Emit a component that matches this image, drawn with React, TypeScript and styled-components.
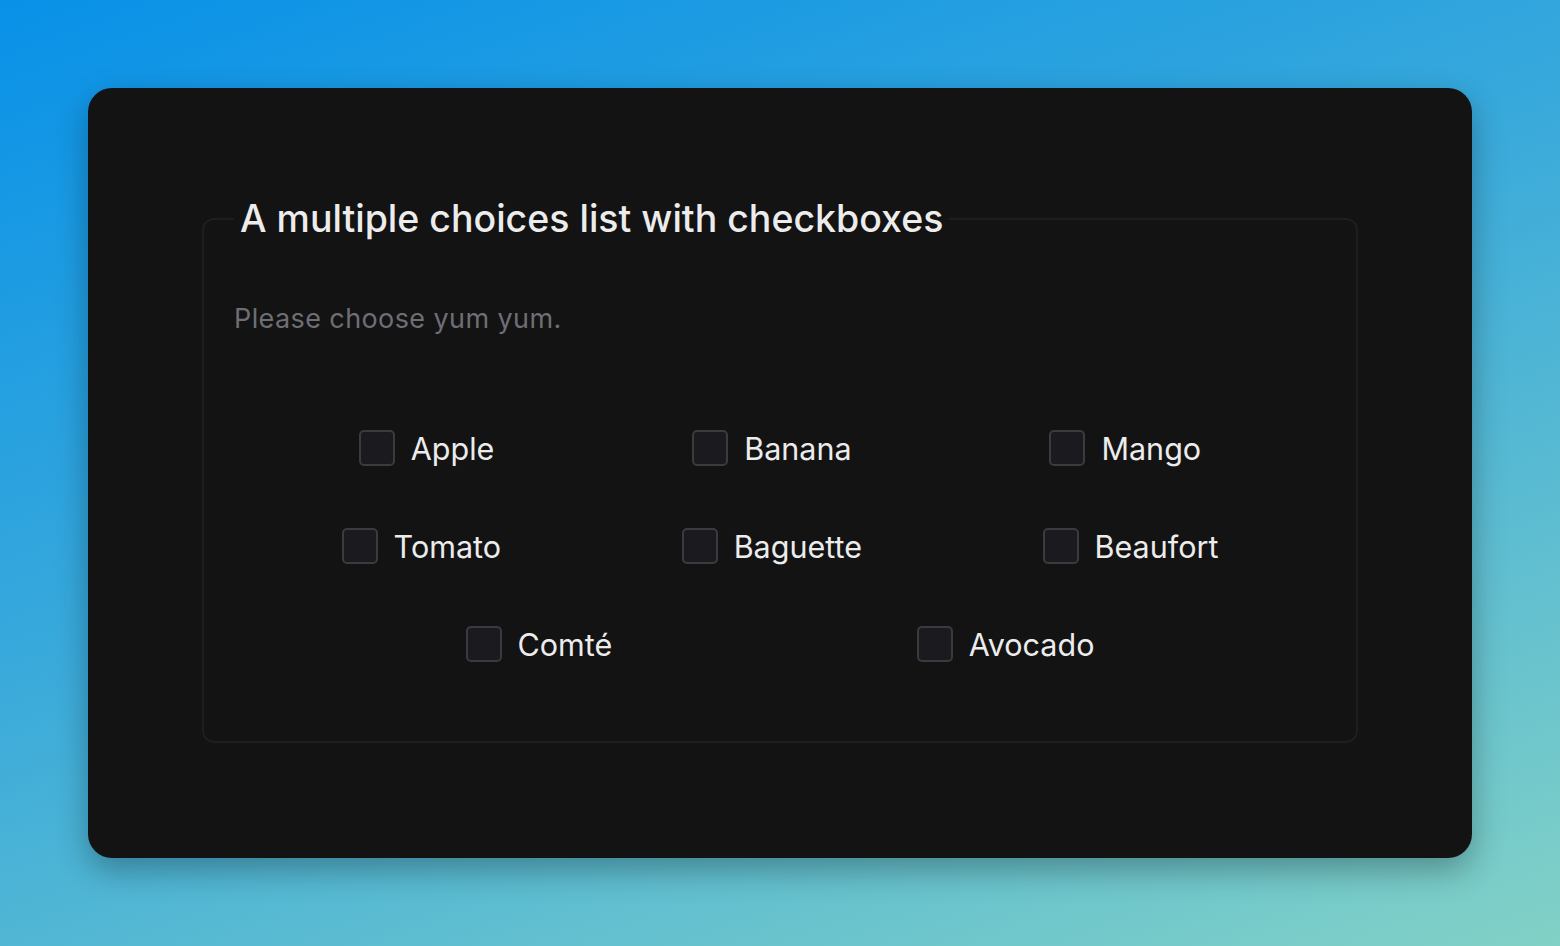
import styled, { createGlobalStyle } from 'styled-components';

const GlobalStyle = createGlobalStyle`
  html, body {
    margin: 0;
    padding: 0;
  }
  body {
    min-height: 946px;
    background: linear-gradient(160deg, #0891e8 0%, #3aaadb 45%, #82d1c6 100%);
    font-family: Inter, "Noto Sans", "Liberation Sans", sans-serif;
  }
`;

const foods = ['Apple', 'Banana', 'Mango', 'Tomato', 'Baguette', 'Beaufort', 'Comté', 'Avocado'];

const App = () => {
  return (
    <>
      <GlobalStyle />
      <Page>
        <Card>
          <Fieldset>
            <Legend>A multiple choices list with checkboxes</Legend>
            <Hint>Please choose yum yum.</Hint>
            <Choices>
              {foods.map((food) => (
                <Choice key={food}>
                  <Box type="checkbox" name="food" value={food} />
                  <span>{food}</span>
                </Choice>
              ))}
            </Choices>
          </Fieldset>
        </Card>
      </Page>
    </>
  );
};

export default App;

const Page = styled.div`
  padding: 88px;
  box-sizing: border-box;
  height: 946px;
`;

const Card = styled.div`
  background: #131313;
  border-radius: 24px;
  height: 770px;
  box-sizing: border-box;
  padding: 108px 114px 0;
  box-shadow: 0 12px 32px rgba(0, 0, 0, 0.3);
`;

const Fieldset = styled.fieldset`
  margin: 0;
  padding: 0 30px 48px;
  border: 2px solid #1e1e21;
  border-radius: 12px;
`;

const Legend = styled.legend`
  padding: 0 6px;
  font-size: 37.5px;
  line-height: 46px;
  font-weight: 500;
  color: #ececec;
`;

const Hint = styled.p`
  margin: 61px 0 0;
  font-size: 27px;
  line-height: 31px;
  letter-spacing: 0.4px;
  color: #6e6e75;
`;

const Choices = styled.div`
  margin-top: 65px;
  display: flex;
  flex-wrap: wrap;
  justify-content: space-evenly;
`;

const Choice = styled.label`
  display: flex;
  align-items: center;
  gap: 16px;
  margin: 30px 73px;
  height: 38px;
  font-size: 30.5px;
  color: #ececec;
  cursor: pointer;
`;

const Box = styled.input`
  appearance: none;
  margin: 0;
  width: 36px;
  height: 36px;
  box-sizing: border-box;
  border: 2px solid #3a3a3f;
  border-radius: 5px;
  background: #1b1b1f;
  cursor: pointer;
`;
